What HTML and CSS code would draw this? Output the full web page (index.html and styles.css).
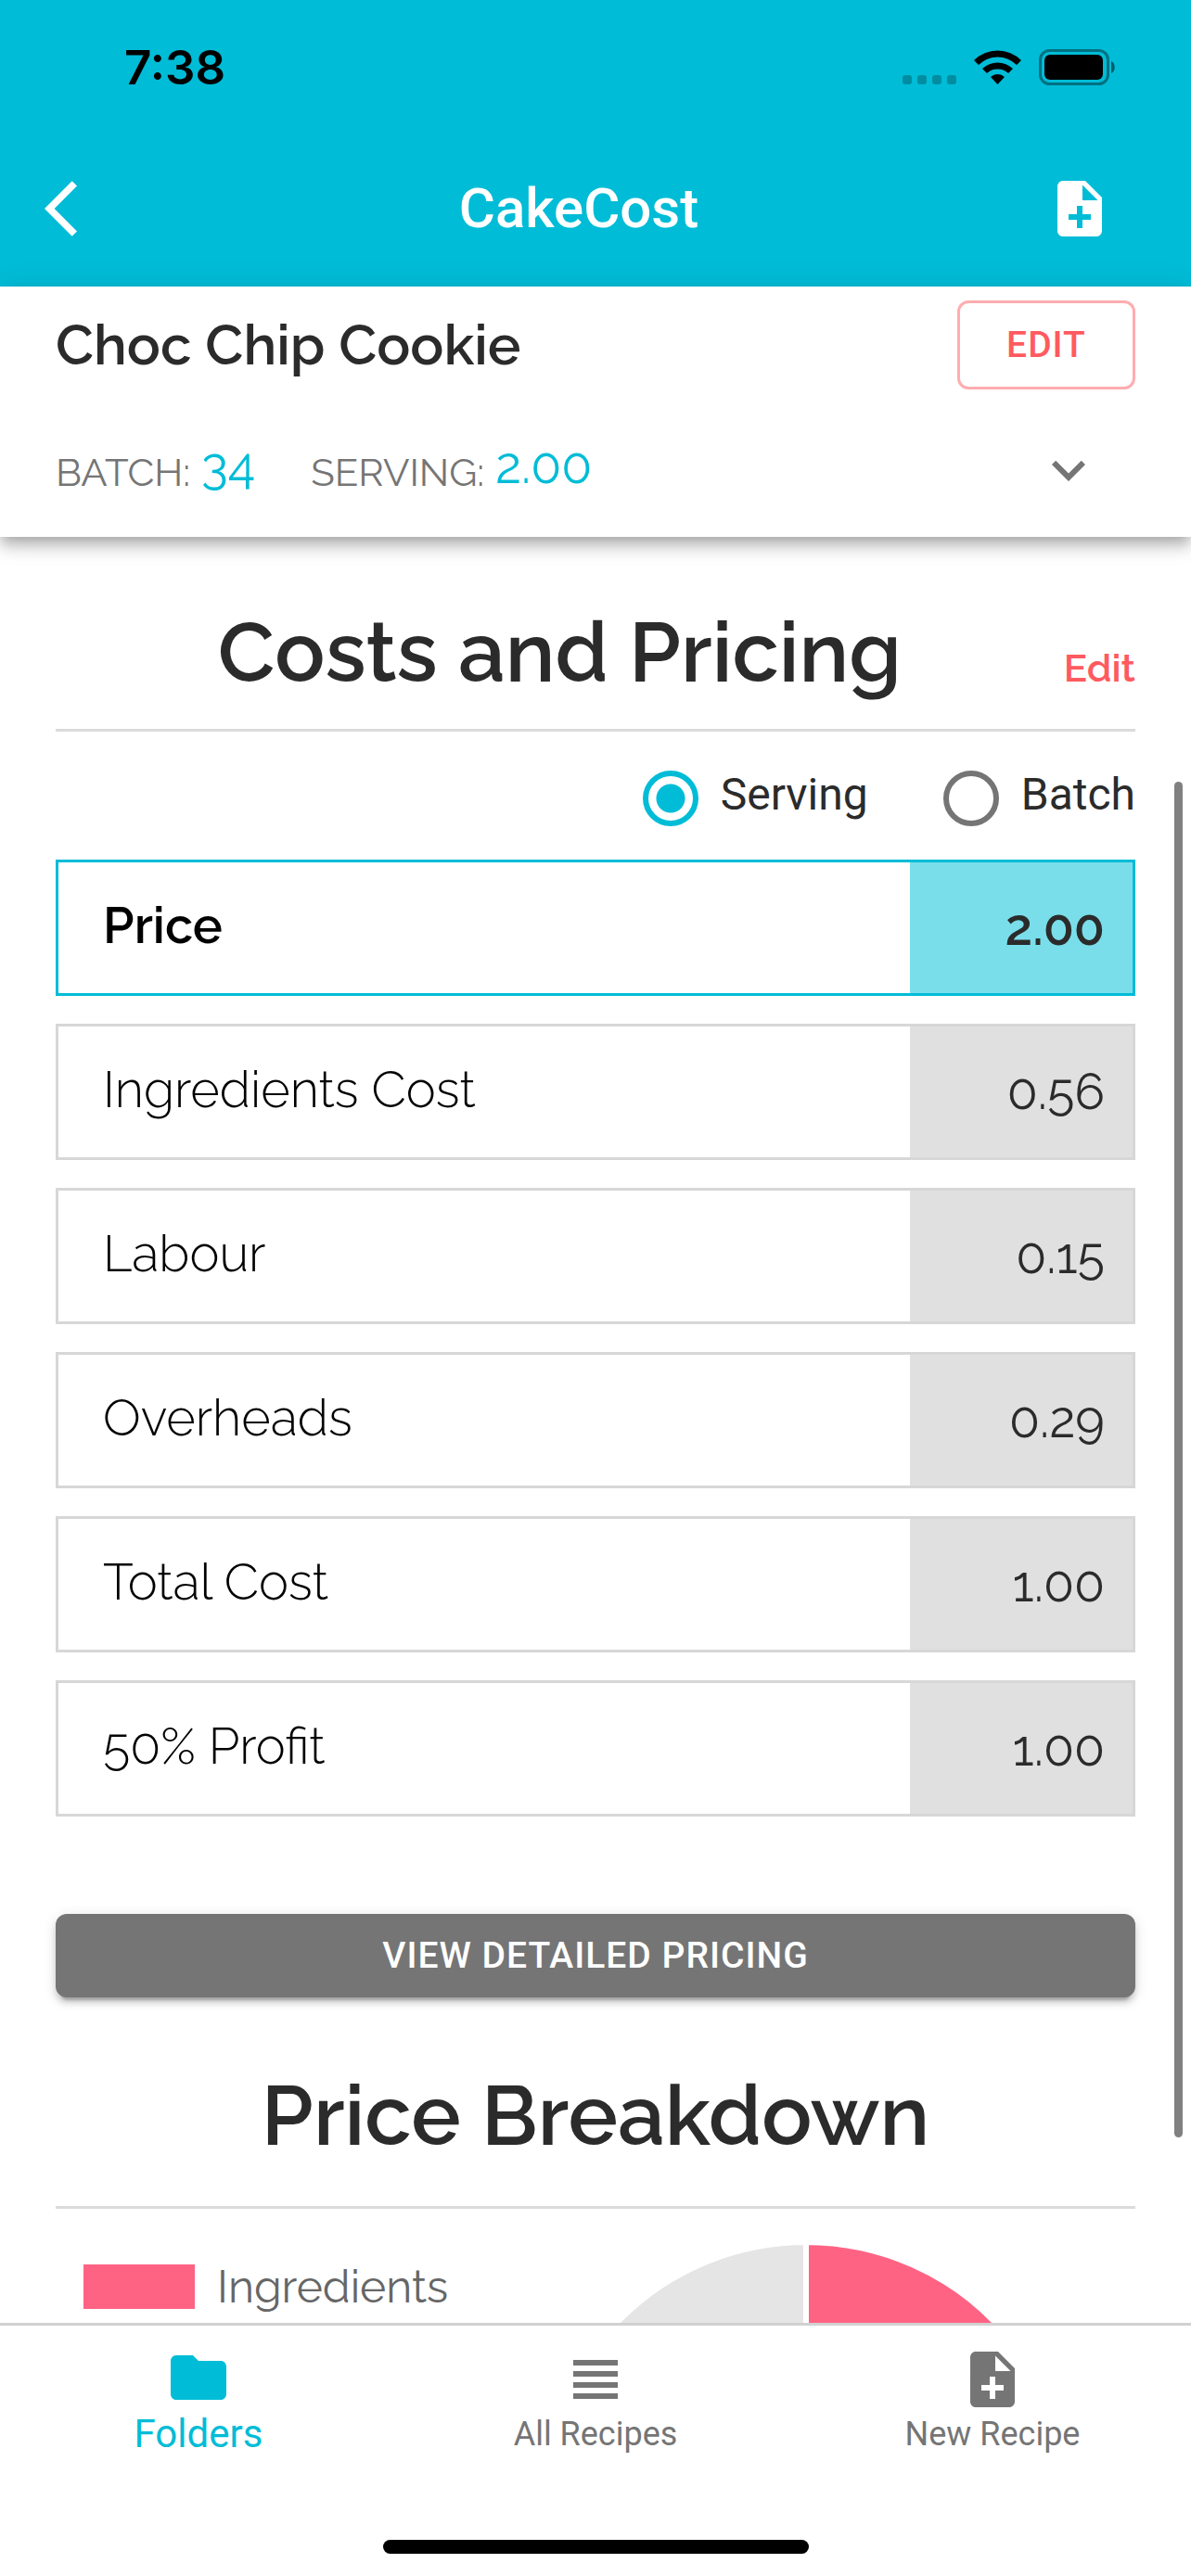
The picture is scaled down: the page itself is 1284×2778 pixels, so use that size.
FILE: index.html
```html
<!DOCTYPE html>
<html lang="en">
<head>
  <meta charset="UTF-8" />
  <meta name="viewport" content="width=device-width, initial-scale=1" />
  <title>CakeCost</title>
  <link rel="stylesheet" href="styles.css">
</head>
<body>

  <header class="app-bar">
    <div class="status-bar">
      <span class="time">7:38</span>
      <svg class="status-icons" viewBox="0 0 230 40" width="230" height="40">
        <g fill="#000" fill-opacity=".25">
          <rect x="0" y="28" width="10" height="10" rx="3" />
          <rect x="16" y="28" width="10" height="10" rx="3" />
          <rect x="32" y="28" width="10" height="10" rx="3" />
          <rect x="48" y="28" width="10" height="10" rx="3" />
        </g>
        <path d="M77 12 A36 36 0 0 1 128 12 L123 17 A29 29 0 0 0 82 17 Z" />
        <path d="M86 21 A24 24 0 0 1 119 21 L114 26 A17 17 0 0 0 91 26 Z" />
        <path d="M95 30 A11 11 0 0 1 110 30 L102.500 38 Z" />
        <rect x="148.500" y="1.500" width="73" height="36" rx="10" fill="none" stroke="#000" stroke-opacity=".4" stroke-width="3" />
        <rect x="153" y="6" width="63" height="27" rx="6" />
        <path d="M225 13 C230 15 230 24 225 26 Z" fill-opacity=".5" />
      </svg>
    </div>
    <div class="toolbar">
      <button class="icon-btn" aria-label="Back">
        <svg class="icon" viewBox="0 0 24 24"><path d="M11.670 3.870L9.900 2.100 0 12l9.900 9.900 1.770-1.770L3.540 12z" /></svg>
      </button>
      <h1 class="app-title">CakeCost</h1>
      <button class="icon-btn" aria-label="New recipe">
        <svg class="icon" viewBox="0 0 24 24"><path d="M14 2H6c-1.100 0-1.990.9-1.990 2L4 20c0 1.100.89 2 1.990 2H18c1.100 0 2-.9 2-2V8l-6-6zm2 14h-3v3h-2v-3H8v-2h3v-3h2v3h3v2zm-3-7V3.500L18.500 9H13z" /></svg>
      </button>
    </div>
  </header>

  <section class="recipe-bar">
    <div class="recipe-row">
      <h2 class="recipe-name">Choc Chip Cookie</h2>
      <button class="btn-outlined">EDIT</button>
    </div>
    <div class="recipe-row">
      <div class="stats">
        <span>BATCH: <b class="stat-value">34</b></span>
        <span>SERVING: <b class="stat-value">2.00</b></span>
      </div>
      <button class="icon-btn expand" aria-label="Show details">
        <svg class="icon" viewBox="0 0 24 24"><path d="M16.590 8.590L12 13.170 7.410 8.590 6 10l6 6 6-6z" /></svg>
      </button>
    </div>
  </section>

  <main class="content">
    <div class="section-head">
      <h2 class="section-title">Costs and Pricing</h2>
      <a class="edit-link" href="#">Edit</a>
    </div>

    <div class="radios">
      <label class="radio"><input type="radio" name="per" checked>Serving</label>
      <label class="radio"><input type="radio" name="per">Batch</label>
    </div>

    <table class="costs">
      <tr class="price"><th scope="row">Price</th><td>2.00</td></tr>
      <tr><th scope="row">Ingredients Cost</th><td>0.56</td></tr>
      <tr><th scope="row">Labour</th><td>0.15</td></tr>
      <tr><th scope="row">Overheads</th><td>0.29</td></tr>
      <tr><th scope="row">Total Cost</th><td>1.00</td></tr>
      <tr><th scope="row">50% Profit</th><td>1.00</td></tr>
    </table>

    <button class="btn-contained">VIEW DETAILED PRICING</button>

    <div class="section-head breakdown">
      <h2 class="section-title">Price Breakdown</h2>
    </div>
    <div class="chart">
      <div class="legend"><span class="swatch"></span>Ingredients</div>
      <svg class="pie" viewBox="0 0 566 566" width="566" height="566">
        <g stroke="#fff" stroke-width="6">
          <path d="M283 283 V0 A283 283 0 0 1 561 336 Z" fill="#ff6384" />
          <path d="M283 283 V566 A283 283 0 0 1 283 0 Z" fill="#e5e5e5" />
        </g>
      </svg>
    </div>

    <div class="scrollbar"></div>
  </main>

  <footer class="bottom-bar">
    <nav class="tabs">
      <a class="tab active" href="#">
        <svg class="icon" viewBox="0 0 24 24"><path d="M10 4H4c-1.100 0-1.990.9-1.990 2L2 18c0 1.100.9 2 2 2h16c1.100 0 2-.9 2-2V8c0-1.100-.9-2-2-2h-8l-2-2z" /></svg>
        Folders
      </a>
      <a class="tab" href="#">
        <svg class="icon" viewBox="0 0 24 24"><path d="M4 15h16v-2H4v2zm0 4h16v-2H4v2zm0-8h16V9H4v2zm0-6v2h16V5H4z" /></svg>
        All Recipes
      </a>
      <a class="tab" href="#">
        <svg class="icon" viewBox="0 0 24 24"><path d="M14 2H6c-1.100 0-1.990.9-1.990 2L4 20c0 1.100.89 2 1.990 2H18c1.100 0 2-.9 2-2V8l-6-6zm2 14h-3v3h-2v-3H8v-2h3v-3h2v3h3v2zm-3-7V3.500L18.500 9H13z" /></svg>
        New Recipe
      </a>
    </nav>
    <div class="home-indicator"></div>
  </footer>

</body>
</html>
```
FILE: styles.css
```css
* { box-sizing: border-box; }
body {
  margin: 0; height: 100vh; display: flex; flex-direction: column;
  font-family: Raleway, Lato, sans-serif; color: #2b2b2b; background: #fff;
}
h1, h2 { margin: 0; }
a { text-decoration: none; }
button { font-family: Roboto, sans-serif; letter-spacing: 1px; cursor: pointer; }

.icon { display: block; width: 72px; height: 72px; fill: currentColor; }
.icon-btn { padding: 0; border: none; background: none; color: inherit; }

/* top bar */
.app-bar { background: #00bcd7; color: #fff; }
.status-bar {
  display: flex; justify-content: space-between; align-items: center;
  height: 141px; padding: 4px 81px 0 134px; color: #000;
}
.time { font: 600 51px/60px Inter, sans-serif; }
.toolbar {
  display: flex; justify-content: space-between; align-items: center;
  height: 168px; padding: 0 84px 0 48px;
}
.app-title { font: 500 60px/72px Roboto, sans-serif; }

/* recipe summary */
.recipe-bar {
  position: relative; z-index: 1; padding: 15px 60px 36px; background: #fff;
  box-shadow: 0 6px 12px -3px rgba(0,0,0,.2), 0 12px 15px rgba(0,0,0,.14), 0 3px 30px rgba(0,0,0,.12);
  display: flex; flex-direction: column; gap: 51px;
}
.recipe-row { display: flex; justify-content: space-between; align-items: center; }
.recipe-name { font-size: 60px; line-height: 72px; font-weight: 600; }
.btn-outlined {
  width: 192px; height: 96px; border: 3px solid #ffadaf; border-radius: 12px;
  background: none; color: #ff5a5f; font-size: 39px; font-weight: 500;
}
.stats { display: flex; gap: 60px; padding-top: 3px; font-size: 42px; line-height: 60px; color: #757575; }
.stat-value { margin-left: 1px; font-size: 54px; line-height: 48px; font-weight: 400; vertical-align: 3px; color: #00bcd7; }
.expand { margin-right: 36px; color: #757575; }

/* scrolling content */
.content { position: relative; flex: 1; min-height: 0; overflow: hidden; padding: 70px 60px 0; }
.section-head {
  display: flex; align-items: baseline; padding-bottom: 29px;
  border-bottom: 3px solid #dbdbdb;
}
.section-title { flex: 1; text-align: center; font-size: 90px; line-height: 108px; font-weight: 600; }
.edit-link { font-size: 42px; font-weight: 600; color: #ff5a5f; }
.breakdown { margin-top: 73px; padding-bottom: 44px; }

.radios { display: flex; justify-content: flex-end; gap: 81px; margin: 42px 0 6px; }
.radio { display: flex; gap: 24px; height: 60px; font: 400 48px/52px Roboto, sans-serif; }
.radio input {
  appearance: none; width: 60px; height: 60px; margin: 0;
  border: 6px solid #757575; border-radius: 50%;
}
.radio input:checked {
  border-color: #00bcd7;
  background: radial-gradient(circle, #00bcd7 15px, transparent 16px);
}

.costs { width: 100%; border-collapse: separate; border-spacing: 0 30px; }
.costs th, .costs td { height: 147px; border: 3px solid #d7d7d7; font-size: 54px; font-weight: 400; }
.costs th { padding: 0 48px 5px; border-right: none; text-align: left; font-weight: 300; color: #000; }
.costs td { width: 243px; padding: 0 30px 2px; border-left: none; text-align: right; background: #e0e0e0; }
.costs .price th, .costs .price td { border-color: #00bcd7; font-weight: 600; }
.costs .price td { background: #79deea; }

.btn-contained {
  width: 100%; height: 90px; margin-top: 75px; border: none; border-radius: 12px;
  background: #757575; color: #fff; font-size: 39px; font-weight: 500;
  box-shadow: 0 9px 3px -6px rgba(0,0,0,.2), 0 6px 6px rgba(0,0,0,.14), 0 3px 15px rgba(0,0,0,.12);
}

.chart { display: flex; justify-content: space-between; padding: 36px 72px 0 30px; }
.legend { display: flex; align-items: center; gap: 24px; height: 96px; font-size: 48px; color: #666; }
.swatch { width: 120px; height: 48px; background: #ff6384; }

.scrollbar {
  position: absolute; top: 264px; right: 9px; width: 9px; height: 1462px;
  border-radius: 5px; background: #808080;
}

/* bottom navigation */
.bottom-bar { border-top: 3px solid #d1d1d1; padding-bottom: 24px; background: #fff; }
.tabs { display: flex; height: 162px; }
.tab {
  flex: 1; display: flex; flex-direction: column; align-items: center; justify-content: center;
  font: 400 36px/46px Roboto, sans-serif; color: #757575;
}
.tab.active { font-size: 42px; line-height: 50px; color: #00bcd7; }
.home-indicator { width: 459px; height: 15px; margin: 69px auto 0; border-radius: 8px; background: #000; }
```
